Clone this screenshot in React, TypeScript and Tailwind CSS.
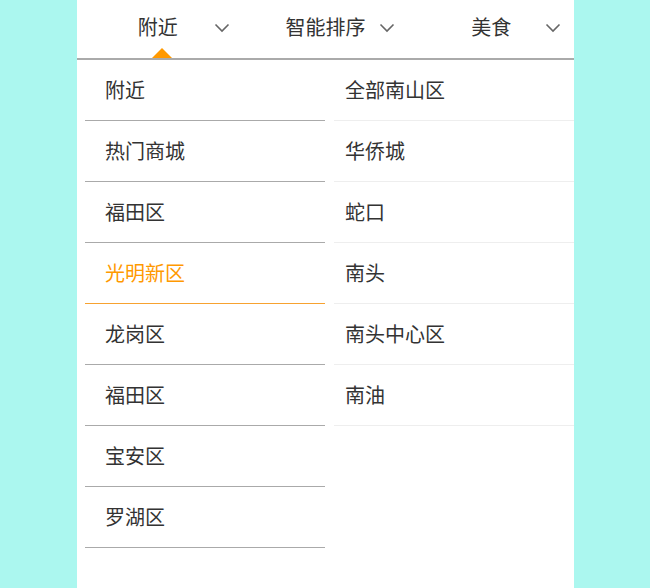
import React from "react";

const tabs = ["附近", "智能排序", "美食"];
const leftItems = ["附近", "热门商城", "福田区", "光明新区", "龙岗区", "福田区", "宝安区", "罗湖区"];
const rightItems = ["全部南山区", "华侨城", "蛇口", "南头", "南头中心区", "南油"];
const ACTIVE = 3;

function Chevron() {
  return (
    <svg width="16" height="10" viewBox="0 0 16 10" className="absolute right-[13px] top-[23px]">
      <polyline points="1.5,1.5 8,8 14.5,1.5" fill="none" stroke="#666" strokeWidth="1.6" />
    </svg>
  );
}

export default function App() {
  return (
    <div
      className="min-h-[588px] bg-[#abf7ef] pl-[77px]"
      style={{ fontFamily: '"Noto Sans CJK SC", "Noto Sans", sans-serif' }}
    >
      <div className="w-[497px] bg-white min-h-[588px]">
        {/* 顶部筛选 */}
        <div className="grid grid-cols-3 h-[60px] border-b-2 border-[#aaa]">
          {tabs.map((t, i) => (
            <div key={t} className="relative flex items-center justify-center pb-[4px]">
              <span className={i === 0 ? "text-[20px] text-[#333] leading-none mr-[4px]" : "text-[20px] text-[#333] leading-none"}>
                {t}
              </span>
              <Chevron />
              {i === 0 && (
                <div className="absolute bottom-0 left-[75px] w-0 h-0 border-l-[10px] border-r-[10px] border-b-[10px] border-l-transparent border-r-transparent border-b-[#f90]" />
              )}
            </div>
          ))}
        </div>

        <div className="flex pl-[8px] gap-[9px]">
          <ul className="w-[240px]">
            {leftItems.map((t, i) => (
              <li
                key={i}
                className={
                  i === ACTIVE
                    ? "h-[61px] flex items-center pl-[20px] border-b border-[#f7a230] text-[20px] text-[#f90]"
                    : "h-[61px] flex items-center pl-[20px] border-b border-[#aaa] text-[20px] text-[#333]"
                }
              >
                {t}
              </li>
            ))}
          </ul>
          <ul className="w-[240px]">
            {rightItems.map((t) => (
              <li
                key={t}
                className="h-[61px] flex items-center pl-[11px] border-b border-[#eee] text-[20px] text-[#333]"
              >
                {t}
              </li>
            ))}
          </ul>
        </div>
      </div>
    </div>
  );
}
